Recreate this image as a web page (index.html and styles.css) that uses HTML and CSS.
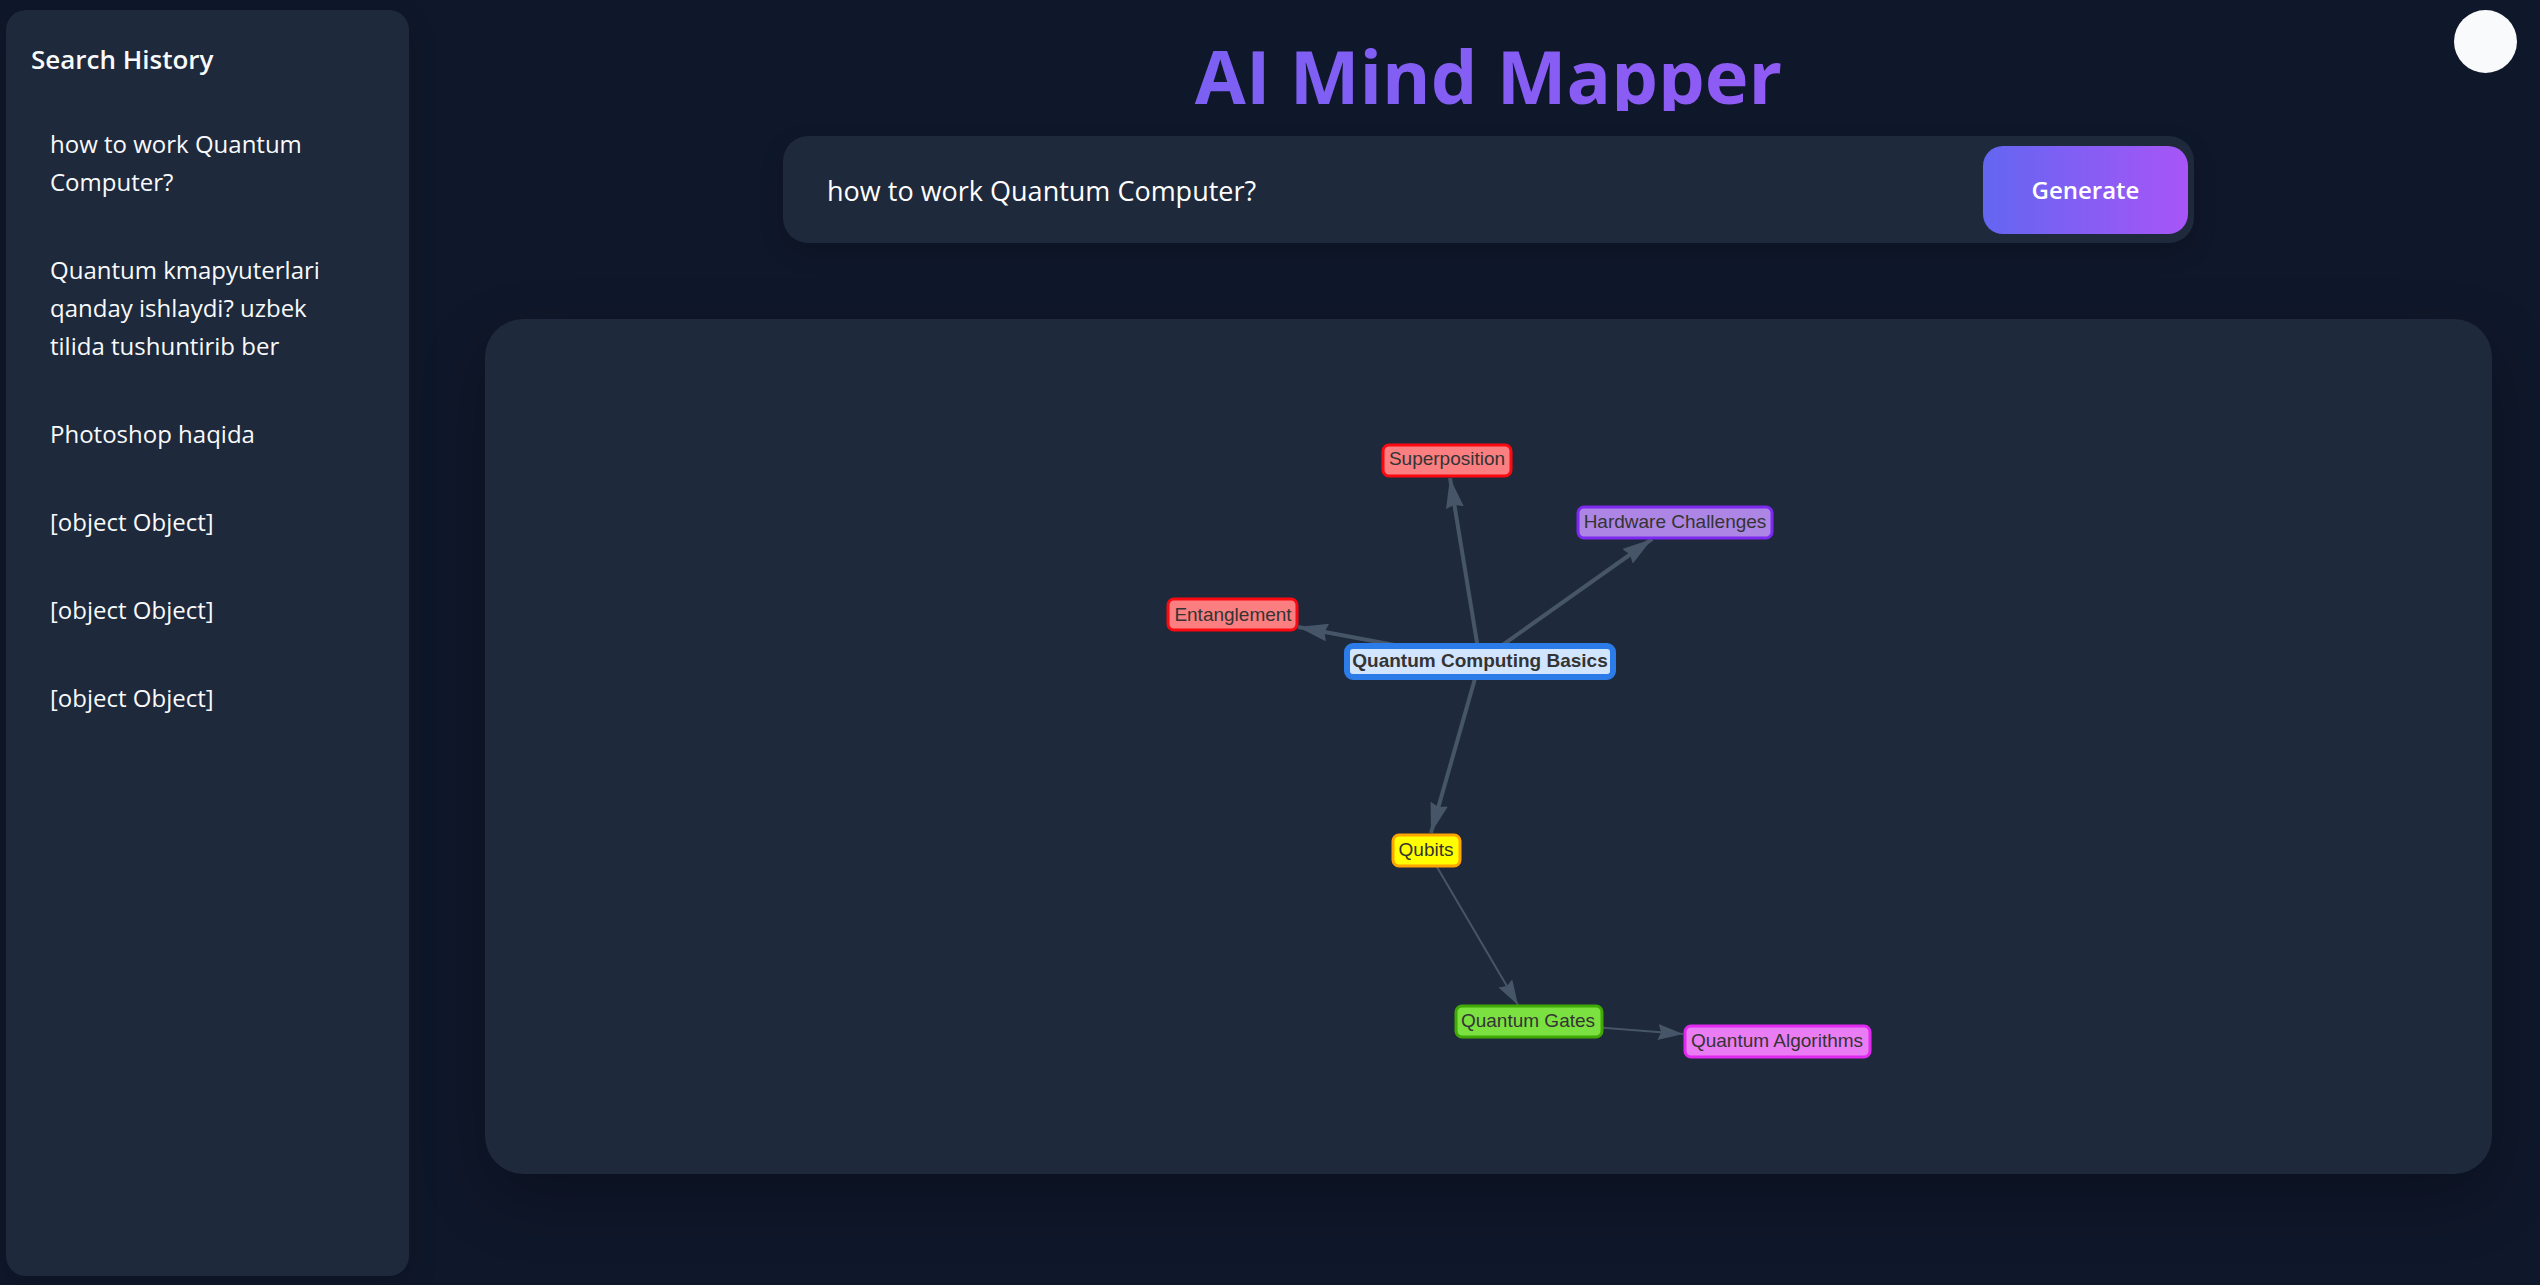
FILE: index.html
```html
<!DOCTYPE html>
<html lang="en">
<head>
<meta charset="utf-8">
<title>AI Mind Mapper</title>
<link rel="stylesheet" href="styles.css">
</head>
<body>
<aside class="sidebar">
  <h2 class="sidebar-title">Search History</h2>
  <ul class="history">
    <li><a class="history-item" href="#">how to work Quantum Computer?</a></li>
    <li><a class="history-item" href="#">Quantum kmapyuterlari qanday ishlaydi? uzbek tilida tushuntirib ber</a></li>
    <li><a class="history-item" href="#">Photoshop haqida</a></li>
    <li><a class="history-item" href="#">[object Object]</a></li>
    <li><a class="history-item" href="#">[object Object]</a></li>
    <li><a class="history-item" href="#">[object Object]</a></li>
  </ul>
</aside>
<main class="main">
  <h1 class="title">AI Mind Mapper</h1>
  <form class="search">
    <input class="search-input" type="text" aria-label="Topic" value="how to work Quantum Computer?">
    <button class="generate" type="button">Generate</button>
  </form>
  <section class="map">
    <svg class="graph" viewBox="485 319 2007 855" role="img" aria-label="Mind map">
      <defs>
        <marker id="arrow-lg" viewBox="0 0 30 18" refX="30" refY="9" markerWidth="30" markerHeight="18" markerUnits="userSpaceOnUse" orient="auto"><path class="head" d="M30 9L0 18L3 9L0 0Z"/></marker>
        <marker id="arrow-sm" viewBox="0 0 25 16" refX="25" refY="8" markerWidth="25" markerHeight="16" markerUnits="userSpaceOnUse" orient="auto"><path class="head" d="M25 8L0 16L3 8L0 0Z"/></marker>
      </defs>
      <g class="edges">
        <path class="edge edge-lg" d="M1480 661L1450 478"/>
        <path class="edge edge-lg" d="M1480 661L1652 539"/>
        <path class="edge edge-lg" d="M1480 661L1298 627"/>
        <path class="edge edge-lg" d="M1480 661L1431 833"/>
        <path class="edge edge-sm" d="M1427 850L1518 1005"/>
        <path class="edge edge-sm" d="M1529 1022L1683 1034"/>
      </g>
      <g class="node red"><rect x="1383" y="445" width="128" height="31" rx="6"/><text x="1447" y="465">Superposition</text></g>
      <g class="node purple"><rect x="1578" y="507" width="194" height="31" rx="6"/><text x="1675" y="528">Hardware Challenges</text></g>
      <g class="node red"><rect x="1168" y="599" width="129" height="31" rx="6"/><text x="1233" y="621">Entanglement</text></g>
      <g class="node root"><rect x="1347" y="646" width="266" height="31" rx="6"/><text x="1480" y="667">Quantum Computing Basics</text></g>
      <g class="node yellow"><rect x="1393" y="835" width="67" height="31" rx="6"/><text x="1426" y="856">Qubits</text></g>
      <g class="node green"><rect x="1456" y="1006" width="146" height="31" rx="6"/><text x="1528" y="1027">Quantum Gates</text></g>
      <g class="node magenta"><rect x="1685" y="1026" width="185" height="31" rx="6"/><text x="1777" y="1047">Quantum Algorithms</text></g>
    </svg>
  </section>
</main>
<button class="theme-toggle" type="button" aria-label="Toggle theme"></button>
</body>
</html>
```
FILE: styles.css
```css
* { box-sizing: border-box; }

body {
  margin: 0;
  min-height: 100vh;
  display: flex;
  padding: 10px 48px 9px 6px;
  background: #0f172a;
  color: #f8fafc;
  font-family: "Open Sans", "Noto Sans", sans-serif;
}

.sidebar {
  flex: 0 0 403px;
  padding: 25px;
  border-radius: 20px;
  background: #1e293b;
  box-shadow: 0 10px 30px rgba(0, 0, 0, 0.15);
}

.sidebar-title {
  margin: 0 0 42px;
  font-size: 26px;
  line-height: 48px;
  font-weight: 600;
}

.history {
  display: flex;
  flex-direction: column;
  gap: 50px;
  margin: 0;
  padding: 0 60px 0 19px;
  list-style: none;
}

.history-item {
  display: block;
  color: inherit;
  font-size: 24px;
  line-height: 38px;
  text-decoration: none;
}

.main {
  flex: 1;
  padding: 31px 0 0 76px;
}

.title {
  margin: 0 0 25px;
  background: linear-gradient(90deg, #6366f1, #a855f7);
  -webkit-background-clip: text;
  background-clip: text;
  color: transparent;
  font-size: 74px;
  line-height: 70px;
  font-weight: 700;
  text-align: center;
}

.search {
  display: flex;
  align-items: center;
  width: calc(70% + 6px);
  margin: 0 auto 76px;
  padding: 10px 6px 9px 0;
  border-radius: 25px;
  background: #1e293b;
  box-shadow: 0 10px 25px rgba(0, 0, 0, 0.15);
}

.search-input {
  flex: 1;
  min-width: 0;
  height: 88px;
  padding: 0 44px;
  border: 0;
  outline: 0;
  background: transparent;
  color: #fff;
  font: 400 27px/38px "Open Sans", "Noto Sans", sans-serif;
}

.generate {
  width: 205px;
  height: 88px;
  border: 0;
  border-radius: 20px;
  background: linear-gradient(90deg, #6366f1, #a855f7);
  color: #fff;
  font: 600 24px/38px "Open Sans", "Noto Sans", sans-serif;
}

.map {
  border-radius: 38px;
  background: #1e293b;
  box-shadow: 0 25px 63px rgba(0, 0, 0, 0.25);
}

.graph { display: block; width: 100%; }

.edge { fill: none; stroke: #475569; }
.edge-lg { stroke-width: 4; marker-end: url(#arrow-lg); }
.edge-sm { stroke-width: 2; marker-end: url(#arrow-sm); }
.head { fill: #475569; }

.node rect { stroke-width: 3; }
.node text {
  fill: #343434;
  font-family: "Liberation Sans", Arial, sans-serif;
  font-size: 19px;
  text-anchor: middle;
}
.red rect { fill: #fb7e81; stroke: #fa0a10; }
.purple rect { fill: #ad85e4; stroke: #7c29f0; }
.yellow rect { fill: #ffff00; stroke: #ffa500; }
.green rect { fill: #7be141; stroke: #41a906; }
.magenta rect { fill: #eb7df4; stroke: #e129f0; }
.root rect { fill: #d2e5ff; stroke: #2b7ce9; stroke-width: 6; }
.root text { font-weight: 700; }

.theme-toggle {
  position: absolute;
  top: 10px;
  right: 23px;
  width: 63px;
  height: 63px;
  border: 0;
  border-radius: 50%;
  background: #f8fafc;
}
```
